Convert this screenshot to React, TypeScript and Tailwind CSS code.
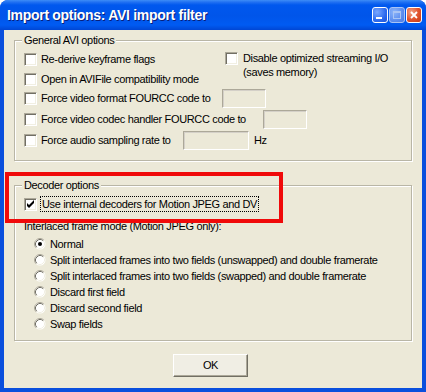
import type { ReactNode } from "react";

function Check({ checked }: { checked?: boolean }) {
  return (
    <span className="relative block h-[13px] w-[13px] shrink-0 border border-t-[#ACA899] border-l-[#ACA899] border-r-white border-b-white bg-white shadow-[inset_1px_1px_0_#716F64,inset_-1px_-1px_0_#F1EFE2]">
      {checked ? (
        <svg className="absolute left-[-1px] top-[-1px]" width="13" height="13" viewBox="0 0 13 13">
          <polygon points="3,5 5,7 10,2 10,5 5,10 3,8" fill="#000" />
        </svg>
      ) : null}
    </span>
  );
}

function Radio({ checked }: { checked?: boolean }) {
  return (
    <svg className="shrink-0" width="12" height="12" viewBox="0 0 12 12">
      <circle cx="6" cy="6" r="5.5" fill="#fff" />
      <path d="M2.11 9.89 A5.5 5.5 0 0 1 9.89 2.11" fill="none" stroke="#ACA899" />
      <path d="M2.82 9.18 A4.5 4.5 0 0 1 9.18 2.82" fill="none" stroke="#716F64" />
      <path d="M9.18 2.82 A4.5 4.5 0 0 1 2.82 9.18" fill="none" stroke="#F1EFE2" />
      {checked ? <circle cx="6" cy="6" r="2" fill="#000" /> : null}
    </svg>
  );
}

function TextBox({ w }: { w: string }) {
  return (
    <span
      className={`block h-[19px] ${w} border border-t-[#ACA899] border-l-[#ACA899] border-r-white border-b-white bg-[#ECE9D8] shadow-[inset_1px_1px_0_#D4D0C8]`}
    />
  );
}

function Group({ title, children, className = "" }: { title: string; children: ReactNode; className?: string }) {
  return (
    <fieldset className={`mx-[10px] border border-[#B9B6A6] pl-[9px] shadow-[1px_1px_0_#fff,inset_1px_1px_0_#fff] ${className}`}>
      <legend className="ml-[-2px] bg-[#ECE9D8] px-[2px] leading-[14px]">{title}</legend>
      {children}
    </fieldset>
  );
}

const radios = [
  "Normal",
  "Split interlaced frames into two fields (unswapped) and double framerate",
  "Split interlaced frames into two fields (swapped) and double framerate",
  "Discard first field",
  "Discard second field",
  "Swap fields",
];

export default function App() {
  return (
    <div className="relative flex h-[392px] w-[426px] flex-col overflow-hidden rounded-t-[8px] bg-[#0A4FDD] font-['Liberation_Sans',sans-serif] text-[11px] tracking-[-0.35px] text-black">
      {/* title bar */}
      <div className="flex h-[30px] shrink-0 items-center bg-[linear-gradient(180deg,#3D8DF7_0px,#2272F2_2px,#0058EE_5px,#0055EA_16px,#005BF2_25px,#0046D4_30px)] pl-[7px] pr-[4px]">
        <span className="flex-1 text-[14px] font-bold tracking-[-0.3px] text-white [text-shadow:1px_1px_0_#0A1E78]">
          Import options: AVI import filter
        </span>
        <div className="flex items-center gap-[1px]">
          <span className="relative block h-[16px] w-[16px] rounded-[3px] border border-white bg-[radial-gradient(circle_at_30%_30%,#7AA8FF_0%,#2D6BEF_60%,#1F54D6_100%)]">
            <span className="absolute bottom-[3px] left-[3px] h-[2px] w-[6px] bg-white" />
          </span>
          <span className="relative block h-[16px] w-[16px] rounded-[3px] border border-[#A9C4F5] bg-[radial-gradient(circle_at_30%_30%,#8CB4FA_0%,#5D8EEF_60%,#4A7BE3_100%)]">
            <span className="absolute left-[3px] top-[3px] h-[8px] w-[8px] border border-t-[2px] border-[#A9C4F5]" />
          </span>
          <span className="relative flex h-[16px] w-[16px] items-center justify-center rounded-[3px] border border-white bg-[radial-gradient(circle_at_30%_30%,#F2A286_0%,#E0512A_55%,#C33A16_100%)]">
            <svg width="8" height="8" viewBox="0 0 8 8">
              <path d="M1 1 L7 7 M7 1 L1 7" stroke="#fff" strokeWidth="1.8" />
            </svg>
          </span>
        </div>
      </div>

      {/* client area */}
      <div className="mx-[4px] mb-[4px] flex flex-1 flex-col bg-[#ECE9D8]">
        <Group title="General AVI options" className="mt-[3px] pb-[10px]">
          <div className="flex pt-[2px]">
            <div className="w-[201px]">
              <div className="flex h-[20px] items-center gap-[4px]">
                <Check />
                <span>Re-derive keyframe flags</span>
              </div>
              <div className="flex h-[20px] items-center gap-[4px]">
                <Check />
                <span>Open in AVIFile compatibility mode</span>
              </div>
            </div>
            <div className="flex items-start gap-[5px] pt-[3px]">
              <Check />
              <span className="mt-[-1px] leading-[14px]">
                Disable optimized streaming I/O
                <br />
                (saves memory)
              </span>
            </div>
          </div>
          <div className="flex h-[19px] items-center">
            <div className="flex w-[198px] items-center gap-[4px]">
              <Check />
              <span>Force video format FOURCC code to</span>
            </div>
            <TextBox w="w-[44px]" />
          </div>
          <div className="mt-[2px] flex h-[19px] items-center">
            <div className="flex w-[239px] items-center gap-[4px]">
              <Check />
              <span>Force video codec handler FOURCC code to</span>
            </div>
            <TextBox w="w-[44px]" />
          </div>
          <div className="mt-[2px] flex h-[19px] items-center">
            <div className="flex w-[159px] items-center gap-[4px]">
              <Check />
              <span>Force audio sampling rate to</span>
            </div>
            <TextBox w="w-[66px]" />
            <span className="ml-[5px]">Hz</span>
          </div>
        </Group>

        <Group title="Decoder options" className="mt-[17px] pb-[8px]">
          <div className="mt-[4px] flex h-[16px] items-center gap-[3px]">
            <Check checked />
            <span className="border border-dotted border-black px-[1px] leading-[14px]">
              Use internal decoders for Motion JPEG and DV
            </span>
          </div>
          <div className="mt-[7px] leading-[14px]">Interlaced frame mode (Motion JPEG only):</div>
          <div className="mt-[3px] pl-[10px]">
            {radios.map((r, i) => (
              <div key={r} className="flex h-[16px] items-center gap-[4px]">
                <Radio checked={i === 0} />
                <span>{r}</span>
              </div>
            ))}
          </div>
        </Group>

        <div className="mt-[13px] pl-[169px]">
          <button
            type="button"
            className="h-[23px] w-[75px] border border-t-white border-l-white border-r-[#716F64] border-b-[#716F64] bg-[#F0EEE4] shadow-[inset_-1px_-1px_0_#ACA899]"
          >
            OK
          </button>
        </div>
      </div>

      {/* annotation */}
      <div className="pointer-events-none absolute left-[5px] top-[172px] h-[51px] w-[278px] border-[4px] border-[#F00A0A]" />
    </div>
  );
}
